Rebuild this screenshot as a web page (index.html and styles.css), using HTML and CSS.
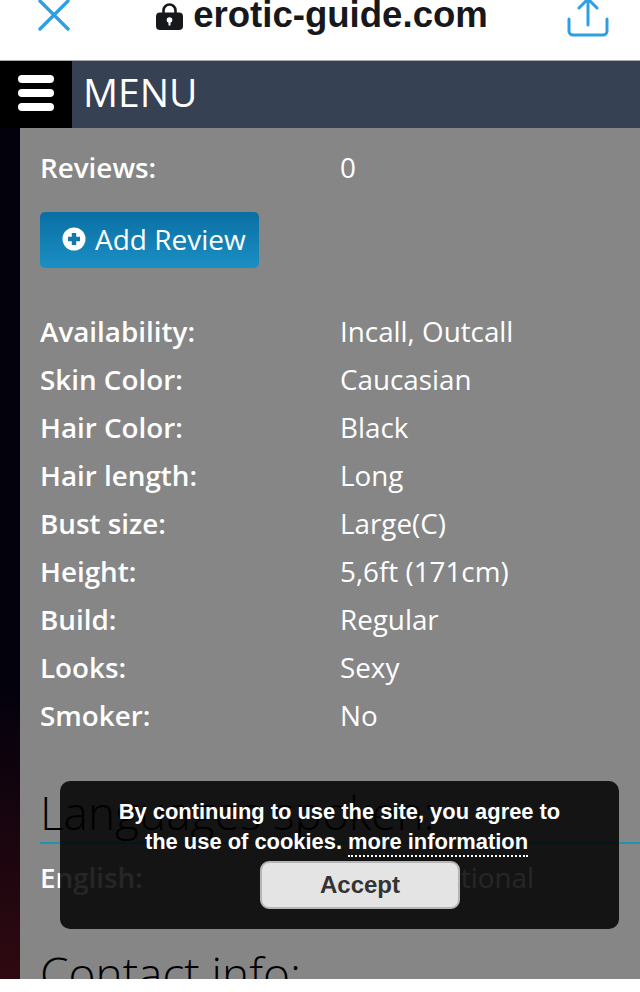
FILE: index.html
```html
<!DOCTYPE html>
<html lang="en">
<head>
    <meta charset="UTF-8">
    <meta name="viewport" content="width=device-width, initial-scale=1.0">
    <title>erotic-guide.com</title>
    <link rel="stylesheet" href="styles.css">
</head>
<body>

    <!-- Browser bar -->
    <div class="browser-bar">
        <svg class="close-icon" width="34" height="34" viewBox="0 0 34 34">
            <path d="M3 3 L31 31 M31 3 L3 31" fill="none" stroke="#2f9fe4" stroke-width="3.4" stroke-linecap="round"/>
        </svg>
        <div class="site-name">
            <svg class="lock-icon" width="27" height="27" viewBox="0 0 27 27">
                <path d="M7.5 11 V7.5 a6 6 0 0 1 12 0 V11" fill="none" stroke="#17181c" stroke-width="2.6"/>
                <rect x="0" y="9.5" width="27" height="17.5" rx="4" fill="#17181c"/>
                <circle cx="13.5" cy="17" r="2.8" fill="#fff"/>
                <rect x="12.5" y="17" width="2" height="5.5" fill="#fff"/>
            </svg>
            <span>erotic-guide.com</span>
        </div>
        <svg class="share-icon" width="42" height="38" viewBox="0 0 42 38">
            <path d="M21 25 V1 M12 8 L21 -1 L30 8" fill="none" stroke="#2f9fe4" stroke-width="3" stroke-linecap="round" stroke-linejoin="round"/>
            <path d="M2 19 V31 a4 4 0 0 0 4 4 H36 a4 4 0 0 0 4 -4 V19" fill="none" stroke="#2f9fe4" stroke-width="3" stroke-linecap="round"/>
        </svg>
    </div>

    <!-- Site menu -->
    <div class="menu-bar">
        <div class="menu-button">
            <span></span>
            <span></span>
            <span></span>
        </div>
        <div class="menu-label">MENU</div>
    </div>

    <div class="page">
        <div class="side-strip"></div>
        <div class="content">
            <div class="row"><b>Reviews:</b><span>0</span></div>

            <a class="add-review">
                <svg width="24" height="24" viewBox="0 0 24 24">
                    <circle cx="12" cy="12" r="11.5" fill="#fff"/>
                    <path d="M12 6 V18 M6 12 H18" stroke="#1578aa" stroke-width="4.4"/>
                </svg>
                Add Review
            </a>

            <div class="details">
                <div class="row"><b>Availability:</b><span>Incall, Outcall</span></div>
                <div class="row"><b>Skin Color:</b><span>Caucasian</span></div>
                <div class="row"><b>Hair Color:</b><span>Black</span></div>
                <div class="row"><b>Hair length:</b><span>Long</span></div>
                <div class="row"><b>Bust size:</b><span>Large(C)</span></div>
                <div class="row"><b>Height:</b><span>5,6ft (171cm)</span></div>
                <div class="row"><b>Build:</b><span>Regular</span></div>
                <div class="row"><b>Looks:</b><span>Sexy</span></div>
                <div class="row"><b>Smoker:</b><span>No</span></div>
            </div>

            <h2 class="section-title">Languages spoken:</h2>
            <div class="row language-row"><b>English:</b><span>Conversational</span></div>

            <h2 class="section-title contact">Contact info:</h2>
        </div>
    </div>

    <div class="bottom-strip"></div>

    <!-- Cookie notice -->
    <div class="cookie-box">
        <p>By continuing to use the site, you agree to the use of cookies. <a>more information</a></p>
        <button>Accept</button>
    </div>

</body>
</html>
```

FILE: styles.css
```css
html, body {
    height: 100%;
}

body {
    margin: 0;
    height: 992px;
    overflow: hidden;
    position: relative;
    display: flex;
    flex-direction: column;
    background-color: #fff;
    font-family: "Open Sans", sans-serif;
    color: #fff;
}

.browser-bar {
    height: 61px;
    flex: none;
    display: flex;
    justify-content: space-between;
    padding: 0 31px 0 37px;
    box-sizing: border-box;
    background-color: #fff;
    overflow: hidden;
    border-bottom: 1px solid #a9abb0;
}

.close-icon {
    margin-top: -2px;
}

.site-name {
    display: flex;
    align-items: flex-start;
    gap: 10px;
    margin-left: 6px;
    font-family: "Liberation Sans", sans-serif;
    font-weight: bold;
    font-size: 36.6px;
    line-height: 30px;
    color: #17181c;
}

.lock-icon {
    margin-top: 3px;
}

.menu-bar {
    height: 67px;
    flex: none;
    display: flex;
    background-color: #364153;
}

.menu-button {
    width: 72px;
    box-sizing: border-box;
    padding-bottom: 3px;
    background-color: #000;
    display: flex;
    flex-direction: column;
    justify-content: center;
    align-items: center;
    gap: 6px;
}

.menu-button span {
    display: block;
    width: 36px;
    height: 8px;
    border-radius: 4px;
    background-color: #fff;
}

.menu-label {
    margin-left: 11px;
    font-size: 39px;
    font-weight: 500;
    line-height: 61px;
    color: #fff;
}

.page {
    height: 851px;
    flex: none;
    display: flex;
    overflow: hidden;
}

.side-strip {
    width: 20px;
    flex: none;
    background: linear-gradient(#02010c, #02010c 65%, #2f0911);
}

.content {
    flex: 1;
    padding: 15px 0 0 20px;
    background-color: #868686;
}

.row {
    display: flex;
    font-size: 27.8px;
    line-height: 48px;
    height: 48px;
}

.row b {
    width: 300px;
    flex: none;
    font-weight: 600;
}

.add-review {
    display: inline-flex;
    align-items: center;
    gap: 9px;
    height: 56px;
    width: 219px;
    box-sizing: border-box;
    margin-top: 21px;
    padding: 0 0 2px 22px;
    border-radius: 5px;
    background: linear-gradient(#0a6fa3, #1b8fc4);
    font-size: 28px;
    color: #fff;
}

.details {
    margin-top: 39px;
}

.section-title {
    margin: 39px 0 0;
    height: 66px;
    box-sizing: border-box;
    border-bottom: 2px solid #1c95ad;
    font-size: 46px;
    font-weight: 300;
    line-height: 68px;
    color: #000;
}

.language-row {
    margin-top: 9px;
}

.section-title.contact {
    margin-top: 38px;
    border-bottom: none;
}

.bottom-strip {
    flex: 1;
    background-color: #fff;
}

.cookie-box {
    position: absolute;
    left: 60px;
    top: 781px;
    width: 559px;
    height: 148px;
    box-sizing: border-box;
    padding-top: 16px;
    border-radius: 10px;
    background-color: rgba(0, 0, 0, 0.85);
    font-family: "Liberation Sans", sans-serif;
    font-weight: bold;
    font-size: 21.9px;
    line-height: 30px;
    text-align: center;
}

.cookie-box p {
    margin: 0 auto;
    width: 470px;
}

.cookie-box a {
    border-bottom: 2px dotted #fff;
    padding-bottom: 1px;
    margin-right: 6px;
}

.cookie-box button {
    display: block;
    width: 200px;
    height: 48px;
    margin: 4px 0 0 200px;
    border: 2px solid #b5b5b5;
    border-radius: 9px;
    background-color: #e4e4e4;
    font-family: "Liberation Sans", sans-serif;
    font-weight: bold;
    font-size: 24px;
    color: #333;
}
```
